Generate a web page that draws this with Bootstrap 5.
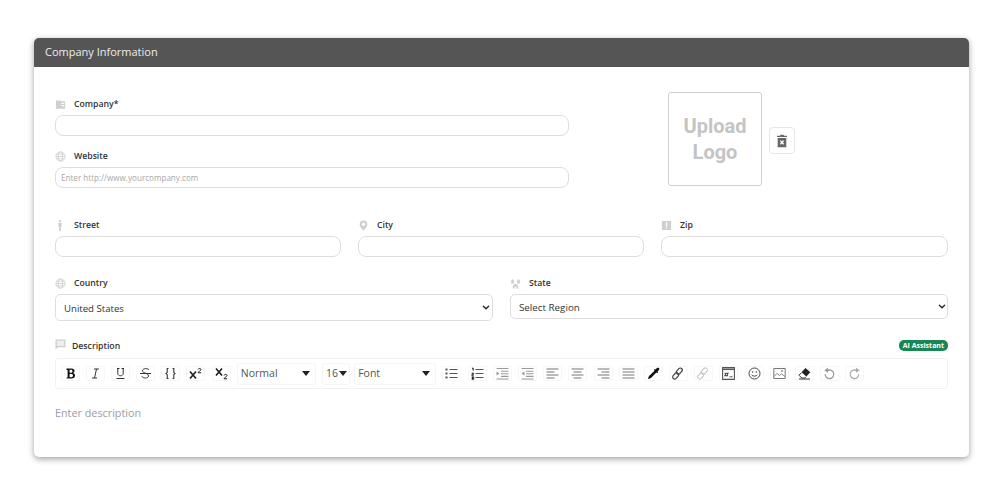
<!DOCTYPE html>
<html lang="en">
<head>
<meta charset="utf-8">
<title>Company Information</title>
<link href="https://cdn.jsdelivr.net/npm/bootstrap@5.3.0/dist/css/bootstrap.min.css" rel="stylesheet">
<style>
html,body{height:500px;overflow:hidden;background:#fff}
body{font-family:"Open Sans","Noto Sans",sans-serif;color:#333}
.page-wrap{padding:38px 31px 0 34px}
.info-card{height:419px;border:0;border-radius:5px;box-shadow:0 2px 6px rgba(0,0,0,.38);overflow:hidden}
.info-head{height:29px;padding:0 11px;background:#555;color:#eee;font-size:11px;line-height:28px;border:0;border-radius:0!important}
.info-body{padding:0 21px 0 21px}
.top-grid{display:flex;padding-top:25px;height:152px}
.left-col{width:513.5px;padding-top:6px}
.logo-col{display:flex;margin-left:99.5px;align-items:center;height:94px}
.logo-box{width:94px;height:94px;border:1.5px solid #d0d0d0;border-radius:3px;color:#c4c4c4;font:700 20px/26px Roboto,sans-serif;display:flex;align-items:center;justify-content:center;text-align:center}
.trash-btn{width:26px;height:27px;margin:3px 0 0 7px;padding:0;border:1px solid #e6e6e6;border-radius:4px;display:flex;align-items:center;justify-content:center;background:#fff}
.fld-label{display:flex;align-items:center;height:11px;padding-top:2px;font-size:8.7px;font-weight:600;color:#333;margin:0}
.fld-tall{height:14px}
.ico{width:11px;height:11px;margin-right:8px;flex:none;color:#cfcfcf}
.ico-bubble{margin-top:-5px;margin-right:6px}
.ctl{height:21px;min-height:0;padding:0 5px;margin-top:6px;border:1px solid #dedede;border-radius:8px;font-size:8.1px;box-shadow:none}
.ctl::placeholder{color:#a8a8a8}
.gap-a{margin-top:14px}
.three-grid{display:grid;grid-template-columns:285.5px 285.5px 287px;column-gap:17.5px}
.two-grid{display:grid;grid-template-columns:437.5px 438px;column-gap:17.5px;margin-top:20px}
.pick{display:block;margin-top:6px;padding:0 0 0 8px;border:1px solid #dedede;border-radius:5px;color:#333;box-shadow:none;background-image:url("data:image/svg+xml,%3csvg xmlns='http://www.w3.org/2000/svg' viewBox='0 0 16 16'%3e%3cpath fill='none' stroke='%23222' stroke-linecap='round' stroke-linejoin='round' stroke-width='3' d='m2 5 6 6 6-6'/%3e%3c/svg%3e");background-position:right 1.5px center;background-size:8px 7px}
.pick-a{height:27px;padding-top:4px;font-size:9.6px}
.pick-b{height:25px;padding-top:3px;font-size:9.8px}
.desc-row{display:flex;justify-content:space-between;align-items:center;margin-top:18px;height:14px}
.ai-tag{font-size:7px;line-height:9px;padding:1px 4px;border-radius:5px;font-weight:700;height:11px;margin-top:-1px;--bs-success-rgb:25,135,84}
.ed-bar{display:flex;align-items:center;gap:6.2px;height:31px;margin-top:5px;padding-left:4.5px;border:1px solid #f2f2f2;border-radius:3px}
.ed-btn{width:19px;height:15px;flex:none;padding:0;border:1px solid #f7f7f7;border-radius:2px;background:#fff;display:flex;align-items:center;justify-content:center;color:#333}
.ed-btn svg{width:13px;height:13px}
.ed-sel{height:22px;flex:none;border:1px solid #f5f5f5;border-radius:3px;padding:0 5px 0 3px;font-size:10.5px;color:#555;display:flex;align-items:center;justify-content:space-between}
.ed-sel::after{content:"";border:4.5px solid transparent;border-top:5px solid #222;border-bottom:0}
.sel-norm{width:79px}.sel-size{width:28px;padding-right:2px;margin-right:-2px}.sel-font{width:82px}
.desc-hold{margin-top:16px;font-size:10.8px;color:#9a9ea3}
</style>
</head>
<body>
<div class="page-wrap">
<div class="card info-card">
<div class="card-header info-head">Company Information</div>
<div class="card-body info-body">
  <div class="top-grid">
    <div class="left-col">
      <label class="fld-label"><svg class="ico" viewBox="0 0 12 12"><path fill="currentColor" d="M1 1.500h5v1h5v8H1zM7 4v1.400h3V4zM7 6.500v1.400h3V6.500z"/></svg>Company*</label>
      <input class="form-control ctl" type="text" aria-label="Company">
      <div class="gap-a"></div>
      <label class="fld-label"><svg class="ico" viewBox="0 0 12 12" fill="none" stroke="currentColor" stroke-width=".9"><circle cx="6" cy="6" r="5"/><ellipse cx="6" cy="6" rx="2.300" ry="5"/><path d="M1 6h10M1.700 3.500h8.600M1.700 8.500h8.600"/></svg>Website</label>
      <input class="form-control ctl" type="text" placeholder="Enter http://www.yourcompany.com">
    </div>
    <div class="logo-col">
      <div class="logo-box">Upload<br>Logo</div>
      <button class="btn trash-btn" type="button" aria-label="Delete logo"><svg width="12" height="14" viewBox="0 0 12 14"><path fill="#666" d="M4.500 .8h3l.5 1h3v1.300H1V1.800h3zM1.700 4h8.600v9.200H1.700z"/><path stroke="#fff" stroke-width="1.300" d="M4.300 6.600l3.400 3.600M7.700 6.600L4.300 10.200"/></svg></button>
    </div>
  </div>
  <div class="three-grid">
    <div><label class="fld-label"><svg class="ico" viewBox="0 0 12 12"><path fill="currentColor" d="M4.500 0h2v2.200h-2zM3.800 3h3.400v4.500H3.800zM4.500 8h2v4h-2z"/></svg>Street</label><input class="form-control ctl" type="text" aria-label="Street"></div>
    <div><label class="fld-label"><svg class="ico" viewBox="0 0 12 12"><path fill="currentColor" fill-rule="evenodd" d="M6 .5a4.200 4.200 0 0 1 4.200 4.200C10.200 7.500 6 11.800 6 11.800S1.800 7.500 1.800 4.700A4.200 4.200 0 0 1 6 .5zM6 2.800a1.900 1.900 0 1 0 0 3.800 1.900 1.900 0 0 0 0-3.800z"/></svg>City</label><input class="form-control ctl" type="text" aria-label="City"></div>
    <div><label class="fld-label"><svg class="ico" viewBox="0 0 12 12"><path fill="currentColor" fill-rule="evenodd" d="M1 1h10v10H1zM5.300 2.800v4.400h1.400V2.800zM5.300 8v1.300h1.400V8z"/></svg>Zip</label><input class="form-control ctl" type="text" aria-label="Zip"></div>
  </div>
  <div class="two-grid">
    <div><label class="fld-label"><svg class="ico" viewBox="0 0 12 12" fill="none" stroke="currentColor" stroke-width=".9"><circle cx="6" cy="6" r="5"/><ellipse cx="6" cy="6" rx="2.300" ry="5"/><path d="M1 6h10M1.700 3.500h8.600M1.700 8.500h8.600"/></svg>Country</label>
      <select class="form-select pick pick-a" aria-label="Country"><option>United States</option></select></div>
    <div><label class="fld-label"><svg class="ico" viewBox="0 0 12 12"><path fill="currentColor" d="M.3 4.200L2.700 1l2.400 3.200H4v2H1.400v-2zM6.900 4.200L9.300 1l2.400 3.200h-1.100v2H8v-2zM3 11.500V8.500L6 6l3 2.500v3H7V9.500H5v2z"/></svg>State</label>
      <select class="form-select pick pick-b" aria-label="State"><option>Select Region</option></select></div>
  </div>
  <div class="desc-row">
    <label class="fld-label fld-tall"><svg class="ico ico-bubble" viewBox="0 0 12 12"><path fill="currentColor" d="M.5.5h11v8.500H3.500L.5 11.500z"/><path fill="#eee" d="M2 2h8v5.500H2z"/></svg>Description</label>
    <span class="badge text-bg-success ai-tag">AI Assistant</span>
  </div>
  <div class="ed-bar">
    <button class="ed-btn" type="button" aria-label="Bold"><svg viewBox="0 0 13 13"><path fill="#111" fill-rule="evenodd" d="M2.500 1.500h5c2 0 3 1 3 2.500 0 1-.6 1.800-1.600 2.100 1.300.3 2.100 1.200 2.100 2.500 0 1.800-1.300 2.900-3.500 2.900h-5v-1h1.100v-7.500H2.500zM5.600 2.700v3h1.400c1 0 1.500-.6 1.500-1.500s-.5-1.500-1.500-1.500zM5.600 6.900v3.400h1.700c1.100 0 1.700-.6 1.700-1.700S8.400 6.900 7.300 6.900z"/></svg></button>
    <button class="ed-btn" type="button" aria-label="Italic"><svg viewBox="0 0 13 13"><path fill="none" stroke="#333" stroke-width="1" d="M5 2h5M3 11h5M7.500 2L5.500 11"/></svg></button>
    <button class="ed-btn" type="button" aria-label="Underline"><svg viewBox="0 0 13 13"><path fill="none" stroke="#333" stroke-width="1" d="M3 1.500h2.500M7.500 1.500H10M3.800 1.500v5c0 3 5.400 3 5.400 0v-5M2.500 11.500h8"/></svg></button>
    <button class="ed-btn" type="button" aria-label="Strikethrough"><svg viewBox="0 0 13 13"><path fill="none" stroke="#333" stroke-width="1" d="M10 3c-.5-2-6.500-2-6.500.8C3.500 6.200 9.500 6 9.500 9c0 2.700-6 2.500-6.500.3M1 6.500h11"/></svg></button>
    <button class="ed-btn" type="button" aria-label="Code"><svg viewBox="0 0 13 13"><path fill="none" stroke="#333" stroke-width="1.100" d="M4.500 1.500H3.200v3.800L2 6.500l1.200 1.200v3.800h1.300M8.500 1.500h1.300v3.800L11 6.500 9.800 7.700v3.800H8.500"/></svg></button>
    <button class="ed-btn" type="button" aria-label="Superscript"><svg viewBox="0 0 13 13"><path fill="none" stroke="#222" stroke-width="1.700" d="M1 4.500l6 7M7 4.500l-6 7"/><path fill="none" stroke="#222" stroke-width="1" d="M9 2.500c.3-1.500 3-1.300 3 0 0 1.200-3 2-3 3.300h3.200"/></svg></button>
    <button class="ed-btn" type="button" aria-label="Subscript"><svg viewBox="0 0 13 13"><path fill="none" stroke="#222" stroke-width="1.700" d="M1 1.500l6 7M7 1.500l-6 7"/><path fill="none" stroke="#222" stroke-width="1" d="M9 8.500c.3-1.500 3-1.300 3 0 0 1.200-3 2-3 3.300h3.200"/></svg></button>
    <div class="ed-sel sel-norm">Normal</div>
    <div class="ed-sel sel-size">16</div>
    <div class="ed-sel sel-font">Font</div>
    <button class="ed-btn" type="button" aria-label="Bullet list"><svg viewBox="0 0 13 13"><path stroke="#555" stroke-width="1.100" d="M4.500 2.500h8M4.500 6.500h8M4.500 10.500h8"/><path fill="#555" d="M.5 1.400h2v2h-2zM.5 5.500h2v2h-2zM.5 9.500h2v2h-2z"/></svg></button>
    <button class="ed-btn" type="button" aria-label="Numbered list"><svg viewBox="0 0 13 13"><path stroke="#555" stroke-width="1.100" d="M4.500 2.500h8M4.500 6.500h8M4.500 10.500h8"/><path stroke="#555" stroke-width=".8" d="M1 1h1.300v3M.7 6h2v1.300H.8v1.300h2M.8 9.700h2v2.800h-2M.8 11h2"/></svg></button>
    <button class="ed-btn" type="button" aria-label="Indent"><svg viewBox="0 0 13 13"><path stroke="#999" stroke-width="1.100" d="M.5 1.500h12M5 4.200h7.500M5 6.800h7.500M5 9.400h7.500M.5 12h12"/><path fill="#999" d="M.5 4.500l3 2-3 2z"/></svg></button>
    <button class="ed-btn" type="button" aria-label="Outdent"><svg viewBox="0 0 13 13"><path stroke="#999" stroke-width="1.100" d="M.5 1.500h12M5 4.200h7.500M5 6.800h7.500M5 9.400h7.500M.5 12h12"/><path fill="#999" d="M3.500 4.500l-3 2 3 2z"/></svg></button>
    <button class="ed-btn" type="button" aria-label="Align left"><svg viewBox="0 0 13 13"><path stroke="#777" stroke-width="1.100" d="M.5 2h12M.5 5h8M.5 8h12M.5 11h8"/></svg></button>
    <button class="ed-btn" type="button" aria-label="Align centre"><svg viewBox="0 0 13 13"><path stroke="#777" stroke-width="1.100" d="M.5 2h12M2.500 5h8M.5 8h12M2.500 11h8"/></svg></button>
    <button class="ed-btn" type="button" aria-label="Align right"><svg viewBox="0 0 13 13"><path stroke="#777" stroke-width="1.100" d="M.5 2h12M4.500 5h8M.5 8h12M4.500 11h8"/></svg></button>
    <button class="ed-btn" type="button" aria-label="Justify"><svg viewBox="0 0 13 13"><path stroke="#777" stroke-width="1.100" d="M.5 2h12M.5 5h12M.5 8h12M.5 11h12"/></svg></button>
    <button class="ed-btn" type="button" aria-label="Colour"><svg viewBox="0 0 13 13"><path fill="#111" d="M10.200.8a1.500 1.500 0 0 1 2 2L10.500 4.600l.6.6-1 1-.8-.8-5.300 5.700-2.500 1-.5-.5 1-2.500 5.600-5.400-.8-.8 1-1 .7.7z"/></svg></button>
    <button class="ed-btn" type="button" aria-label="Link"><svg viewBox="0 0 13 13"><g fill="none" stroke="#444" stroke-width="1.200"><rect x="5.300" y=".6" width="4" height="7" rx="2" transform="rotate(42 7.300 4.100)"/><rect x="1.700" y="5.400" width="4" height="7" rx="2" transform="rotate(42 3.700 8.900)"/></g></svg></button>
    <button class="ed-btn" type="button" aria-label="Unlink"><svg viewBox="0 0 13 13"><g fill="none" stroke="#c4c4c4" stroke-width="1"><rect x="5.300" y=".6" width="4" height="7" rx="2" transform="rotate(42 7.300 4.100)"/><rect x="1.700" y="5.400" width="4" height="7" rx="2" transform="rotate(42 3.700 8.900)"/></g></svg></button>
    <button class="ed-btn" type="button" aria-label="HTML"><svg viewBox="0 0 13 13"><path fill="none" stroke="#555" stroke-width="1.100" d="M.6.6h11.800v11.800H.6z"/><path stroke="#555" stroke-width="1.500" d="M.6 2.300h11.800"/><path stroke="#444" stroke-width=".9" fill="none" d="M4 5.500l-1 4M6 5.500l-1 4M2.600 6.600h3.800M2.300 8.400h3.800M7.500 9.800h3"/></svg></button>
    <button class="ed-btn" type="button" aria-label="Emoji"><svg viewBox="0 0 13 13"><circle cx="6.500" cy="6.500" r="5.500" fill="none" stroke="#444" stroke-width="1"/><circle cx="4.600" cy="5" r=".8" fill="#444"/><circle cx="8.400" cy="5" r=".8" fill="#444"/><path fill="none" stroke="#444" d="M3.700 7.800c.8 1.800 4.800 1.800 5.600 0"/></svg></button>
    <button class="ed-btn" type="button" aria-label="Image"><svg viewBox="0 0 13 13"><path fill="none" stroke="#777" d="M.8 1.500h11.400v10H.8z"/><path fill="none" stroke="#888" d="M1 9.500l3-3.200 2.500 2.200 2-1.700 3.500 2.700"/><circle cx="9" cy="4" r=".9" fill="#888"/></svg></button>
    <button class="ed-btn" type="button" aria-label="Clear formatting"><svg viewBox="0 0 13 13"><path fill="#222" d="M7.500 1l4.800 4.300-4 4.200-4.800-4.300z"/><path fill="none" stroke="#333" d="M3.500 5.700L1 8.200 3.700 11h3l1.300-1.300M1 12h11"/></svg></button>
    <button class="ed-btn" type="button" aria-label="Undo"><svg viewBox="0 0 13 13"><path fill="none" stroke="#999" stroke-width="1.300" d="M4 3.800a4.300 4.300 0 1 1-1.800 3.500"/><path fill="#999" d="M5 .8v5L1.300 3.300z"/></svg></button>
    <button class="ed-btn" type="button" aria-label="Redo"><svg viewBox="0 0 13 13"><path fill="none" stroke="#aaa" stroke-width="1.300" d="M9 3.800a4.300 4.300 0 1 0 1.800 3.500"/><path fill="#aaa" d="M8 .8v5l3.700-2.500z"/></svg></button>
  </div>
  <div class="desc-hold">Enter description</div>
</div>
</div>
</div>
<script src="https://cdn.jsdelivr.net/npm/bootstrap@5.3.0/dist/js/bootstrap.bundle.min.js"></script>
</body>
</html>
